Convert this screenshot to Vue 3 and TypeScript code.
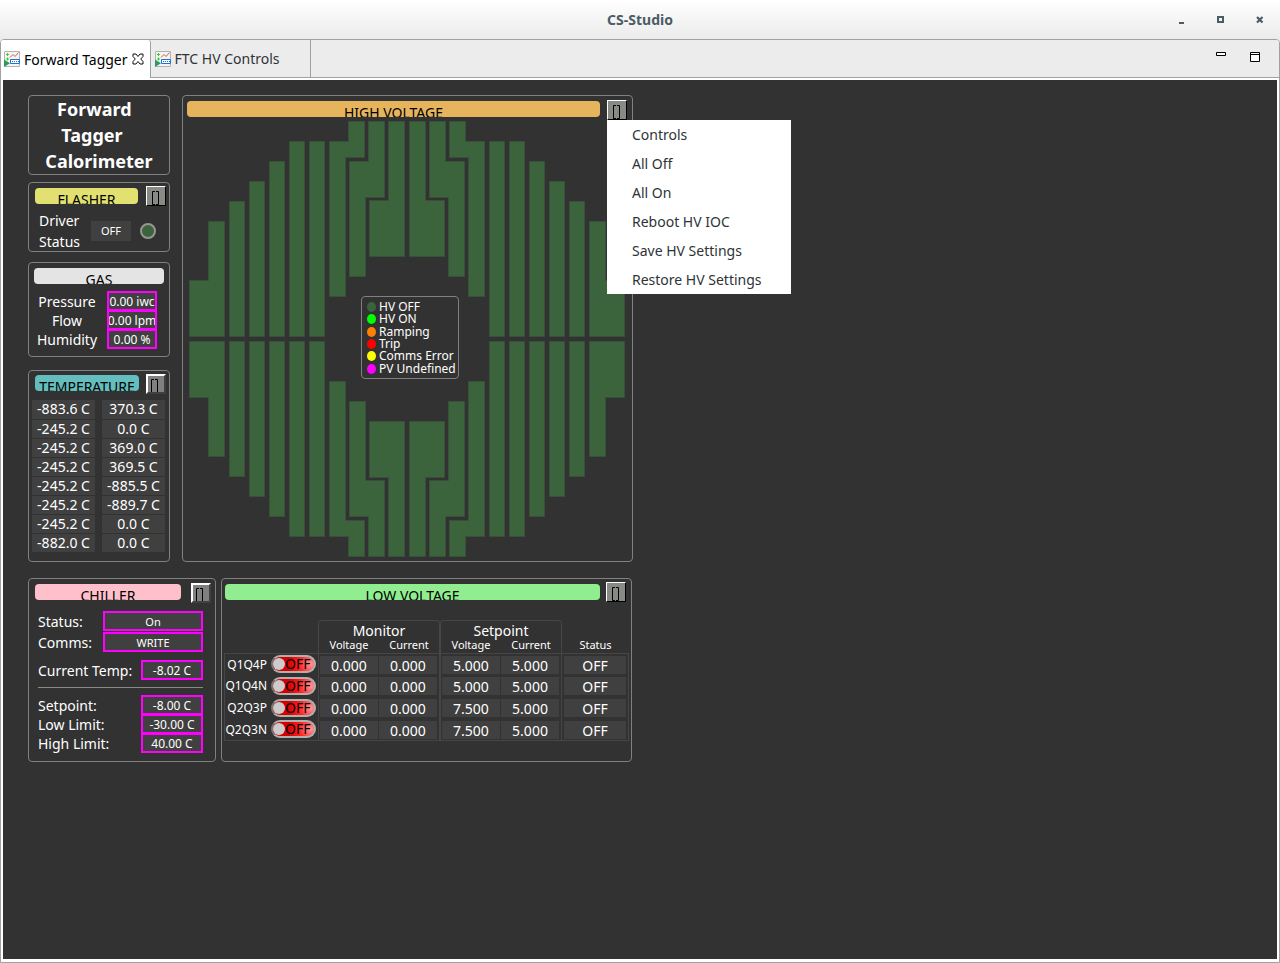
<script setup lang="ts">
import { ref } from 'vue'

interface LvRow {
  name: string
  monitorV: string
  monitorC: string
  setV: string
  setC: string
  status: string
}

const tabs = [
  { title: 'Forward Tagger', active: true },
  { title: 'FTC HV Controls', active: false },
]

const menuItems = ['Controls', 'All Off', 'All On', 'Reboot HV IOC', 'Save HV Settings', 'Restore HV Settings']

const gas = [
  { label: 'Pressure', value: '0.00 iwc' },
  { label: 'Flow', value: '0.00 lpm' },
  { label: 'Humidity', value: '0.00 %' },
]

const temperatures: [string, string][] = [
  ['-883.6 C', '370.3 C'],
  ['-245.2 C', '0.0 C'],
  ['-245.2 C', '369.0 C'],
  ['-245.2 C', '369.5 C'],
  ['-245.2 C', '-885.5 C'],
  ['-245.2 C', '-889.7 C'],
  ['-245.2 C', '0.0 C'],
  ['-882.0 C', '0.0 C'],
]

const legend = [
  { label: 'HV OFF', kind: 'off' },
  { label: 'HV ON', kind: 'on' },
  { label: 'Ramping', kind: 'ramp' },
  { label: 'Trip', kind: 'trip' },
  { label: 'Comms Error', kind: 'comms' },
  { label: 'PV Undefined', kind: 'undef' },
]

const limits = [
  { label: 'Setpoint:', value: '-8.00 C' },
  { label: 'Low Limit:', value: '-30.00 C' },
  { label: 'High Limit:', value: '40.00 C' },
]

const lvRows = ref<LvRow[]>([
  { name: 'Q1Q4P', monitorV: '0.000', monitorC: '0.000', setV: '5.000', setC: '5.000', status: 'OFF' },
  { name: 'Q1Q4N', monitorV: '0.000', monitorC: '0.000', setV: '5.000', setC: '5.000', status: 'OFF' },
  { name: 'Q2Q3P', monitorV: '0.000', monitorC: '0.000', setV: '7.500', setC: '5.000', status: 'OFF' },
  { name: 'Q2Q3N', monitorV: '0.000', monitorC: '0.000', setV: '7.500', setC: '5.000', status: 'OFF' },
])

// One quadrant of crystal groups; the other three are mirrored copies.
const crystals = [
  '-217.5,-58.5 -198.5,-58.5 -198.5,-117.5 -182.5,-117.5 -182.5,-2.5 -217.5,-2.5',
  '-177.5,-137.5 -162.5,-137.5 -162.5,-2.5 -177.5,-2.5',
  '-157.5,-157.5 -142.5,-157.5 -142.5,-2.5 -157.5,-2.5',
  '-137.5,-177.5 -122.5,-177.5 -122.5,-2.5 -137.5,-2.5',
  '-117.5,-197.5 -102.5,-197.5 -102.5,-2.5 -117.5,-2.5',
  '-97.5,-197.5 -82.5,-197.5 -82.5,-2.5 -97.5,-2.5',
  '-77.5,-197.5 -58.5,-197.5 -58.5,-217.5 -42.5,-217.5 -42.5,-181.5 -61.5,-181.5 -61.5,-42.5 -77.5,-42.5',
  '-38.5,-217.5 -22.5,-217.5 -22.5,-141.5 -41.5,-141.5 -41.5,-62.5 -57.5,-62.5 -57.5,-177.5 -38.5,-177.5',
  '-18.5,-217.5 -2.5,-217.5 -2.5,-82.5 -37.5,-82.5 -37.5,-138.5 -18.5,-138.5',
]
const quadrants = ['scale(1,1)', 'scale(-1,1)', 'scale(1,-1)', 'scale(-1,-1)']
</script>

<template>
  <div class="window">
    <header class="titlebar">
      <h1 class="window-title">CS-Studio</h1>
      <div class="window-buttons">
        <button type="button" aria-label="Minimize">
          <svg width="8" height="8" viewBox="0 0 8 8"><path d="M1 6h5v2H1z" fill="#4a5c65" /></svg>
        </button>
        <button type="button" aria-label="Maximize">
          <svg width="8" height="8" viewBox="0 0 8 8"><path d="M1 1h5v5H1z" fill="none" stroke="#4a5c65" stroke-width="2" /></svg>
        </button>
        <button type="button" aria-label="Close">
          <svg width="8" height="8" viewBox="0 0 8 8"><path d="M1 1l5.500 5.500M6.500 1L1 6.500" fill="none" stroke="#4a5c65" stroke-width="2.200" /></svg>
        </button>
      </div>
    </header>

    <main class="folder">
      <nav class="tabs">
        <a v-for="tab in tabs" :key="tab.title" href="#" class="tab" :class="{ active: tab.active }">
          <svg class="tab-icon" width="16" height="16" viewBox="0 0 16 16">
            <path d="M.5 .5h15v15H.5z" fill="#f4f4f4" stroke="#b4b4b4" />
            <path d="M3.500 2v3M2 3.500h3M3.500 6.500v3M2 8h3" stroke="#35d035" stroke-width="1" />
            <path d="M6 6.500l3-3 2 2 3.500-4" fill="none" stroke="#e0602a" stroke-width="1" />
            <path d="M6.500 8.500h9v4h-9z" fill="#fff" stroke="#1a73d8" />
            <path d="M8 10.500h7" stroke="#1a73d8" stroke-dasharray="1 1" />
            <path d="M0 8.500l6 3.700-6 3.800z" fill="#2f9a5c" />
          </svg>
          <span>{{ tab.title }}</span>
          <svg v-if="tab.active" class="tab-close" width="12" height="12" viewBox="0 0 12 12">
            <path d="M1 1h3l2 2.500L8 1h3v2.500L8.700 6 11 8.500V11H8L6 8.500 4 11H1V8.500L3.300 6 1 3.500z" fill="#fff" stroke="#111" />
          </svg>
        </a>
        <div class="folder-tools">
          <button type="button" aria-label="Minimize view">
            <svg width="11" height="11" viewBox="0 0 11 11"><path d="M.5 .5h9v3h-9z" fill="#fff" stroke="#000" /></svg>
          </button>
          <button type="button" aria-label="Maximize view">
            <svg width="11" height="11" viewBox="0 0 11 11"><path d="M.5 .5h9v9h-9zM.5 2.500h9" fill="#fff" stroke="#000" /></svg>
          </button>
        </div>
      </nav>

      <div class="display">
        <div class="board">
          <div class="row top">
            <div class="side">
              <section class="panel name-panel">
                <h2>Forward&nbsp;&nbsp;<br />Tagger&nbsp;&nbsp;&nbsp;<br />Calorimeter</h2>
              </section>

              <section class="panel flasher">
                <div class="head">
                  <h3 class="banner yellow">FLASHER</h3>
                  <button type="button" class="menu-btn" aria-label="Flasher menu">
                    <svg width="7" height="14" viewBox="0 0 7 14"><path d="M3 .5H.5v13H3M4 .5h2.500v13H4" /></svg>
                  </button>
                </div>
                <div class="flasher-body">
                  <p>Driver<br />Status</p>
                  <output class="off-box">OFF</output>
                  <span class="led"></span>
                </div>
              </section>

              <section class="panel gas">
                <h3 class="banner silver">GAS</h3>
                <div class="gas-body">
                  <div v-for="g in gas" :key="g.label" class="gas-row">
                    <span class="gas-label">{{ g.label }}</span>
                    <output class="pv num"><span>{{ g.value }}</span></output>
                  </div>
                </div>
              </section>

              <section class="panel temperature">
                <div class="head">
                  <h3 class="banner teal">TEMPERATURE</h3>
                  <button type="button" class="menu-btn raised" aria-label="Temperature menu">
                    <svg width="7" height="13" viewBox="0 0 7 13"><path d="M3 .5H.5V13M4 .5h2.500V13" /></svg>
                  </button>
                </div>
                <table class="temps">
                  <tbody>
                    <tr v-for="(t, i) in temperatures" :key="i">
                      <td>{{ t[0] }}</td>
                      <td>{{ t[1] }}</td>
                    </tr>
                  </tbody>
                </table>
              </section>
            </div>

            <section class="panel hv">
              <div class="head">
                <h3 class="banner orange">HIGH VOLTAGE</h3>
                <div class="menu-anchor">
                  <button type="button" class="menu-btn" aria-label="High voltage menu" aria-expanded="true">
                    <svg width="7" height="14" viewBox="0 0 7 14"><path d="M3 .5H.5v13H3M4 .5h2.500v13H4" /></svg>
                  </button>
                  <ul class="popup" role="menu">
                    <li v-for="m in menuItems" :key="m" role="none">
                      <button type="button" role="menuitem">{{ m }}</button>
                    </li>
                  </ul>
                </div>
              </div>
              <div class="map">
                <svg class="map-svg" viewBox="-218 -218 436 436" aria-label="Calorimeter high voltage map">
                  <g v-for="q in quadrants" :key="q" :transform="q">
                    <polygon v-for="c in crystals" :key="c" :points="c" />
                  </g>
                </svg>
                <ul class="legend">
                  <li v-for="l in legend" :key="l.kind"><i class="dot" :class="l.kind"></i>{{ l.label }}</li>
                </ul>
              </div>
            </section>
          </div>

          <div class="row bottom">
            <section class="panel chiller">
              <div class="head">
                <h3 class="banner pink">CHILLER</h3>
                <button type="button" class="menu-btn raised" aria-label="Chiller menu">
                  <svg width="7" height="13" viewBox="0 0 7 13"><path d="M3 .5H.5V13M4 .5h2.500V13" /></svg>
                </button>
              </div>
              <div class="chiller-body">
                <div class="chill-row wide"><span>Status:</span><output class="pv">On</output></div>
                <div class="chill-row wide"><span>Comms:</span><output class="pv">WRITE</output></div>
                <div class="chill-row current"><span>Current Temp:</span><output class="pv num">-8.02 C</output></div>
                <hr />
                <div v-for="l in limits" :key="l.label" class="chill-row limit">
                  <span>{{ l.label }}</span><output class="pv num">{{ l.value }}</output>
                </div>
              </div>
            </section>

            <section class="panel lv">
              <div class="head">
                <h3 class="banner green">LOW VOLTAGE</h3>
                <button type="button" class="menu-btn" aria-label="Low voltage menu">
                  <svg width="7" height="14" viewBox="0 0 7 14"><path d="M3 .5H.5v13H3M4 .5h2.500v13H4" /></svg>
                </button>
              </div>
              <table class="lv-table">
                <colgroup>
                  <col class="c-name" /><col class="c-num" /><col class="c-num" /><col class="c-num" /><col class="c-num" /><col />
                </colgroup>
                <thead>
                  <tr class="groups">
                    <td></td>
                    <th colspan="2" class="group">Monitor</th>
                    <th colspan="2" class="group">Setpoint</th>
                    <td></td>
                  </tr>
                  <tr class="cols">
                    <td></td>
                    <th class="gl">Voltage</th>
                    <th class="gr">Current</th>
                    <th class="gl">Voltage</th>
                    <th class="gr">Current</th>
                    <th>Status</th>
                  </tr>
                </thead>
                <tbody>
                  <tr v-for="r in lvRows" :key="r.name">
                    <th class="first" scope="row">
                      <div class="name-cell">
                        <span>{{ r.name }}</span>
                        <button type="button" role="switch" aria-checked="false" class="toggle" :aria-label="r.name + ' power'">
                          <i class="knob"></i>OFF
                        </button>
                      </div>
                    </th>
                    <td class="gl"><span class="val">{{ r.monitorV }}</span></td>
                    <td class="gr"><span class="val">{{ r.monitorC }}</span></td>
                    <td class="gl"><span class="val">{{ r.setV }}</span></td>
                    <td class="gr"><span class="val">{{ r.setC }}</span></td>
                    <td class="last"><span class="val">{{ r.status }}</span></td>
                  </tr>
                </tbody>
              </table>
            </section>
          </div>
        </div>
      </div>
    </main>
  </div>
</template>

<style>
html,
body {
  margin: 0;
  background: #ededed;
}
</style>

<style scoped>
.window {
  min-height: 100vh;
  display: flex;
  flex-direction: column;
  font-family: 'Noto Sans', 'Open Sans', sans-serif;
  font-size: 14px;
  color: #fff;
}
.window *,
.window {
  box-sizing: border-box;
}
h1, h2, h3, p, ul {
  margin: 0;
  padding: 0;
  font-weight: 400;
  list-style: none;
}
button {
  font: inherit;
  padding: 0;
  border: 0;
  background: none;
  color: inherit;
}
svg {
  display: block;
  flex: none;
}
.titlebar {
  height: 39px;
  display: grid;
  grid-template-columns: 1fr auto 1fr;
  align-items: center;
  background: linear-gradient(#fff, #ebebeb);
}
.window-title {
  grid-column: 2;
  font-size: 14px;
  font-weight: 700;
  color: #4a5c65;
}
.window-buttons {
  display: flex;
  justify-content: flex-end;
  gap: 31px;
  padding-right: 16px;
}
.folder {
  flex: 1;
  display: flex;
  flex-direction: column;
  border: 1px solid #a1a1a1;
  border-radius: 4px 4px 0 0;
  background: #fff;
}
.tabs {
  height: 38px;
  display: flex;
  background: #ececec;
  border-bottom: 1px solid #a1a1a1;
  border-radius: 3px 3px 0 0;
}
.tab {
  height: 37px;
  display: flex;
  align-items: center;
  gap: 4px;
  padding: 0 30px 0 4px;
  border-right: 1px solid #a1a1a1;
  color: #2e3436;
  text-decoration: none;
}
.tab.active {
  height: 38px;
  padding: 0 6px 0 3px;
  background: #fff;
  color: #000;
  border-radius: 3px 3px 0 0;
}
.folder-tools {
  margin-left: auto;
  padding: 12px 18px 0 0;
  display: flex;
  align-items: flex-start;
  gap: 23px;
}
.display {
  flex: 1;
  margin: 2px 2px 3px;
  padding: 15px 25px;
  background: #323232;
}
.board {
  max-width: 605px;
}
.row {
  display: grid;
}
.top {
  grid-template-columns: 142px 1fr;
  gap: 12px;
}
.bottom {
  grid-template-columns: 188px 1fr;
  gap: 5px;
  margin-top: 16px;
  padding-right: 1px;
}
.side {
  display: flex;
  flex-direction: column;
}
.panel {
  border: 1px solid #808080;
  border-radius: 4px;
}
.name-panel {
  height: 80px;
}
.name-panel h2 {
  font-size: 18px;
  line-height: 26px;
  font-weight: 700;
  text-align: center;
}
.head {
  display: flex;
  justify-content: space-between;
}
.banner {
  flex: 1;
  height: 16px;
  border-radius: 4px;
  overflow: hidden;
  color: #000;
  font-size: 14px;
  line-height: 23px;
  text-align: center;
}
.yellow { background: #e1e070; }
.silver { background: #e4e4e4; }
.teal { background: #64bebe; }
.orange { background: #e6b45c; }
.pink { background: #ffc0cb; }
.green { background: #90ee90; }
.menu-btn {
  flex: none;
  width: 20px;
  height: 20px;
  display: flex;
  padding: 4px 0 0 5px;
  overflow: hidden;
  background: #888a85;
  border: 1px solid #000;
  border-top-color: #fff;
  border-left-color: #fff;
}
.menu-btn path {
  fill: none;
  stroke: #000;
}
.menu-btn.raised {
  background: #808080;
  padding: 3px 0 0 3px;
  border: 2px solid #404040;
  border-top-color: #fff;
  border-left-color: #fff;
}
.flasher {
  height: 70px;
  margin-top: 7px;
}
.flasher .head {
  padding: 3px 3px 0 6px;
  gap: 8px;
}
.head .banner {
  margin-top: 2px;
}
.flasher-body {
  display: flex;
  align-items: center;
  margin-top: 4px;
  padding-left: 10px;
  line-height: 21px;
}
.flasher-body p {
  width: 52px;
}
.off-box {
  width: 40px;
  background: #404040;
  font-size: 11px;
  line-height: 20px;
  text-align: center;
}
.led {
  width: 16px;
  height: 16px;
  margin-left: 9px;
  border: 2px solid #969696;
  border-radius: 50%;
  background: #3c643c;
}
.gas {
  height: 95px;
  margin-top: 10px;
  padding: 5px;
}
.gas-body {
  margin-top: 7px;
}
.gas-row {
  display: grid;
  grid-template-columns: 66px 50px;
  justify-content: start;
  column-gap: 7px;
  height: 19px;
  line-height: 22px;
}
.gas-label {
  text-align: center;
}
.pv {
  height: 20px;
  display: flex;
  justify-content: center;
  overflow: hidden;
  border: 2px solid #f0f;
  background: #404040;
  font-size: 11px;
  line-height: 17px;
  white-space: nowrap;
}
.pv.num {
  font-size: 12px;
}
.temperature {
  height: 192px;
  margin-top: 13px;
}
.temperature .head {
  padding: 3px 3px 0 6px;
  gap: 7px;
}
.temperature .banner {
  margin-top: 1px;
}
.temps {
  width: 133px;
  margin: 6px 0 0 3px;
  table-layout: fixed;
  border-collapse: collapse;
}
.temps td {
  height: 19px;
  padding: 0;
  line-height: 18px;
  border-bottom: 1px solid #323232;
  background: #404040;
  text-align: center;
}
.temps td:first-child {
  border-right: 7px solid #323232;
}
.hv .head {
  padding: 4px 5px 0 4px;
  gap: 7px;
}
.hv .banner {
  margin-top: 1px;
}
.menu-anchor {
  position: relative;
}
.popup {
  position: absolute;
  z-index: 2;
  top: 20px;
  left: 0;
  width: 184px;
  background: #fff;
  color: #2e3436;
}
.popup button {
  width: 100%;
  height: 29px;
  padding-left: 25px;
  text-align: left;
}
.map {
  position: relative;
  padding: 1px 7px 3px 6px;
}
.map-svg {
  width: 100%;
}
.map-svg polygon {
  fill: #3c643c;
  stroke: #38503a;
}
.legend {
  position: absolute;
  left: 178px;
  top: 176px;
  width: 98px;
  height: 83px;
  display: flex;
  flex-direction: column;
  padding: 4px 0 3px 5px;
  border: 1px solid #808080;
  border-radius: 4px;
  background: #323232;
  font-size: 12px;
  white-space: nowrap;
}
.legend li {
  flex: 1;
  display: flex;
  align-items: center;
  gap: 3px;
  line-height: 12px;
}
.dot {
  width: 9px;
  height: 10px;
  border-radius: 50%;
}
.dot.off { background: #3c643c; }
.dot.on { background: #0f0; }
.dot.ramp { background: #ff8000; }
.dot.trip { background: #f00; }
.dot.comms { background: #ff0; }
.dot.undef { background: #f0f; }
.chiller,
.lv {
  height: 184px;
}
.chiller .head {
  padding: 4px 4px 0 6px;
  gap: 10px;
}
.chiller .banner {
  margin-top: 1px;
}
.chiller-body {
  padding: 8px 12px 0 9px;
}
.chill-row {
  display: grid;
  grid-template-columns: 1fr 62px;
  line-height: 22px;
}
.chill-row.wide {
  grid-template-columns: 1fr 100px;
  height: 21px;
}
.chill-row.current {
  height: 20px;
  margin-top: 7px;
}
.chill-row.limit {
  height: 19px;
}
hr {
  margin: 7px 0;
  border: 0;
  border-top: 1px solid #888a85;
}
.lv .head {
  padding: 3px 5px 0 3px;
  gap: 6px;
}
.lv-table {
  width: 405px;
  margin: 18px 0 0 2px;
  table-layout: fixed;
  border-collapse: separate;
  border-spacing: 0;
}
.c-name { width: 94px; }
.c-num { width: 61px; }
.lv-table th {
  padding: 0;
  font-weight: 400;
}
.lv-table td {
  padding: 0;
}
.groups th {
  height: 20px;
  line-height: 19px;
  border: 1px solid #464646;
  border-bottom: 0;
  border-radius: 4px 4px 0 0;
}
.cols th {
  height: 13px;
  padding-bottom: 3px;
  font-size: 11px;
  line-height: 10px;
}
.gl { border-left: 1px solid #464646; }
.gr { border-right: 1px solid #464646; }
tbody .first { border-left: 1px solid #464646; }
tbody .last { border-right: 1px solid #464646; }
.lv-table tbody tr > * {
  height: 22px;
}
.lv-table tbody tr:first-child > * {
  border-top: 1px solid #464646;
}
.lv-table tbody tr:last-child > * {
  border-bottom: 1px solid #464646;
}
.name-cell {
  display: flex;
  align-items: center;
  justify-content: flex-end;
  gap: 4px;
  padding: 0 2px 1px 0;
  font-size: 12px;
}
.toggle {
  width: 45px;
  height: 18px;
  display: flex;
  align-items: center;
  border: 2px solid #b0b0b0;
  border-left-color: #777;
  border-radius: 9px;
  background: radial-gradient(circle at 92% 50%, #ff9a9a, #f22 30%, #d40000 60%);
  color: #000;
  font-size: 14px;
  line-height: 14px;
}
.knob {
  width: 12px;
  height: 12px;
  border-radius: 50%;
  background: #ccc;
}
.val {
  display: block;
  height: 18px;
  line-height: 19px;
  background: #404040;
  text-align: center;
}
.gl .val { margin-left: 1px; margin-right: 1px; }
.gr .val { margin-right: 2px; }
.last .val { margin: 0 2px; }
</style>
